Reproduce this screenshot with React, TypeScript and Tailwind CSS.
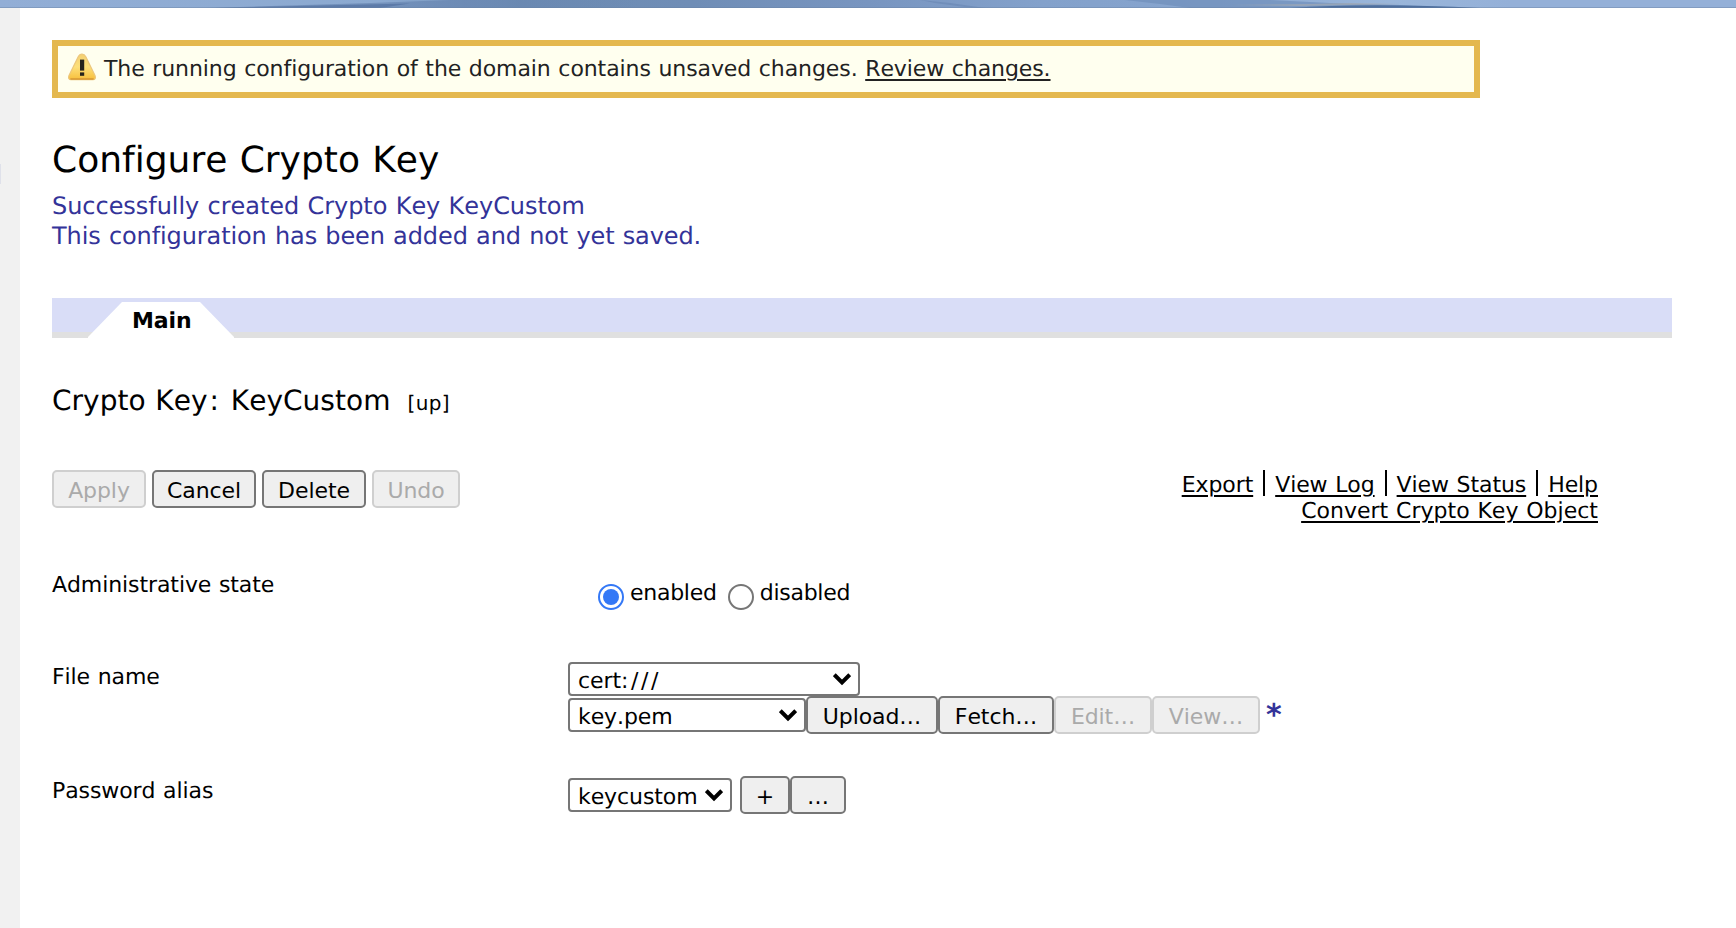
import type { ReactNode } from "react";

function Button({ children, className = "", disabled = false }: { children: ReactNode; className?: string; disabled?: boolean }) {
  const tone = disabled ? "border-[#cfcfcf] text-[#aaaaaa]" : "border-[#767676] text-black";
  return (
    <button
      type="button"
      disabled={disabled}
      className={`flex h-[38px] shrink-0 items-center justify-center rounded-[5px] border-2 bg-[#efefef] pt-[3px] leading-[30px] whitespace-nowrap ${tone} ${className}`}
    >
      {children}
    </button>
  );
}

function Select({ children, className = "" }: { children: ReactNode; className?: string }) {
  return (
    <div className={`flex h-[34px] shrink-0 items-center justify-between rounded-[4px] border-2 border-[#767676] bg-white pr-[7px] pl-2 leading-[26px] whitespace-nowrap ${className}`}>
      <span className="pt-[5px]">{children}</span>
      <svg width="18" height="13" viewBox="0 0 18 13" className="shrink-0" fill="none" stroke="#000" strokeWidth="4">
        <path d="M1.3 1.6 L9 9.3 L16.7 1.6" />
      </svg>
    </div>
  );
}

function Link({ children }: { children: ReactNode }) {
  return (
    <a href="#" className="underline decoration-2 underline-offset-[3px]">
      {children}
    </a>
  );
}

function Divider() {
  return <span className="-mt-[3px] h-[26px] w-0.5 bg-black" />;
}

function Radio({ label, checked = false, className = "" }: { label: string; checked?: boolean; className?: string }) {
  return (
    <label className={`flex items-start ${className}`}>
      <span
        className={`mt-1 flex size-[26px] shrink-0 items-center justify-center rounded-full border-2 bg-white ${checked ? "border-[#3478f6]" : "border-[#767676]"}`}
      >
        {checked && <span className="size-4 rounded-full bg-[#3478f6]" />}
      </span>
      <span className="mt-px ml-[6px] leading-[26px] tracking-[-0.012em]">{label}</span>
    </label>
  );
}

function WarningIcon() {
  return (
    <svg width="30" height="28" viewBox="0 0 30 28" className="shrink-0">
      <defs>
        <linearGradient id="warn" x1="0" y1="0" x2="0" y2="1">
          <stop offset="0" stopColor="#f3cf72" />
          <stop offset="0.5" stopColor="#fde07a" />
          <stop offset="1" stopColor="#f7bf3c" />
        </linearGradient>
      </defs>
      <path
        d="M15 1 C16.8 1 18 2.2 18.8 3.8 L28 22.4 C29 24.8 28.2 26.6 26 26.6 L4 26.6 C1.8 26.6 1 24.8 2 22.4 L11.2 3.8 C12 2.2 13.2 1 15 1 Z"
        fill="url(#warn)"
        stroke="#ecc67c"
        strokeWidth="1.2"
      />
      <path d="M3.4 26 L26.6 26" stroke="#d99a35" strokeWidth="1.6" />
      <rect x="13" y="6.6" width="4.2" height="11" fill="#26241c" />
      <rect x="13" y="19.4" width="4.2" height="3.4" fill="#26241c" />
    </svg>
  );
}

function HeaderStrip() {
  return (
    <svg width="1736" height="8" viewBox="0 0 1736 8" className="block">
      <defs>
        <linearGradient id="sky" x1="0" y1="0" x2="1" y2="0">
          <stop offset="0" stopColor="#92aed6" />
          <stop offset="0.22" stopColor="#8ba9d0" />
          <stop offset="0.3" stopColor="#6d8cb3" />
          <stop offset="0.4" stopColor="#6f8db6" />
          <stop offset="0.5" stopColor="#7895c0" />
          <stop offset="0.6" stopColor="#83a1cb" />
          <stop offset="0.66" stopColor="#85a3cd" />
          <stop offset="0.8" stopColor="#9ab6da" />
          <stop offset="0.87" stopColor="#94b0d8" />
          <stop offset="1" stopColor="#94b0d8" />
        </linearGradient>
        <linearGradient id="ridge" x1="0" y1="0" x2="1" y2="0">
          <stop offset="0" stopColor="#6684b0" />
          <stop offset="0.6" stopColor="#6684b0" />
          <stop offset="1" stopColor="#6684b0" stopOpacity="0" />
        </linearGradient>
      </defs>
      <rect width="1736" height="8" fill="url(#sky)" />
      <path d="M205 8 Q290 5.5 370 3 L450 0 L640 0 L640 8 Z" fill="url(#ridge)" opacity="0.65" />
      <path d="M215 8 Q310 5.5 410 3.5 L380 8 Z" fill="#4e6d9c" opacity="0.6" />
      <path d="M920 0 L950 3 L985 8 L965 7 L935 3 Z" fill="#6382b0" opacity="0.5" />
      <path d="M1125 0 L1270 0 L1330 3 L1400 5 L1470 8 L1190 8 L1160 4 Z" fill="#6f8fba" opacity="0.7" />
      <path d="M1230 5 Q1290 4.5 1350 3 L1400 4 L1300 6 Z" fill="#a3a9b3" opacity="0.7" />
      <path d="M1290 8 Q1370 2.5 1480 8 Z" fill="#496a9a" opacity="0.9" />
      <rect y="7" width="1736" height="1" fill="#66809f" opacity="0.4" />
    </svg>
  );
}

export default function App() {
  return (
    <div className="flex h-[928px] w-[1736px] flex-col overflow-hidden bg-white font-['Verdana','DejaVu_Sans',sans-serif] text-[22px] leading-[26px] tracking-[-0.004em] text-black [font-kerning:none] [text-rendering:geometricPrecision] [word-spacing:0.034em]">
      <HeaderStrip />
      <div className="flex flex-1">
        <aside className="w-5 shrink-0 bg-[#f1f1f1] pt-[156px]">
          <div className="h-5 w-px bg-[#dfe1ea]" />
        </aside>
        <main className="flex-1 pt-8 pl-8">
          <div className="flex h-[58px] w-[1428px] items-start border-6 border-[#e4b84f] bg-[#ffffef] pl-[9px] text-[#222222]">
            <div className="mt-[7px]">
              <WarningIcon />
            </div>
            <p className="mt-[11px] ml-[7px] whitespace-pre">
              The running configuration of the domain contains unsaved changes. <Link>Review changes.</Link>
            </p>
          </div>

          <h1 className="mt-[41px] text-[36px] leading-[44px] tracking-[0.0005em]">Configure Crypto Key</h1>
          <div className="mt-2 text-[24px] leading-[30px] text-[#333399]">
            <p className="tracking-[-0.002em]">Successfully created Crypto Key KeyCustom</p>
            <p className="tracking-[-0.0045em]">This configuration has been added and not yet saved.</p>
          </div>

          <nav className="mt-[47px] flex h-10 w-[1620px] border-b-6 border-[#e0e0e0] bg-[#d9ddf7]">
            <div className="mt-1 ml-9 h-9 w-[146px] bg-white pl-[44px] text-[22px] leading-[40px] font-bold [clip-path:polygon(34px_0,112px_0,146px_35px,146px_36px,0_36px,0_35px)]">
              <span>Main</span>
            </div>
          </nav>

          <h2 className="mt-[45px] flex h-[35px] items-baseline text-[28px] leading-[36px] tracking-[0.001em]">
            <span>
              Crypto Key<span className="px-[2px]">:</span> KeyCustom
            </span>
            <span className="ml-[17px] text-[20px] tracking-[0.02em]">[up]</span>
          </h2>

          <div className="mt-[52px] flex h-[52px] w-[1546px] items-start justify-between">
            <div className="flex gap-[6px]">
              <Button disabled className="w-[94px]">Apply</Button>
              <Button className="w-[104px]">Cancel</Button>
              <Button className="w-[104px]">Delete</Button>
              <Button disabled className="w-[88px]">Undo</Button>
            </div>
            <div className="flex flex-col items-end pt-[3px]">
              <div className="flex h-[26px] gap-[10px]">
                <Link>Export</Link>
                <Divider />
                <Link>View Log</Link>
                <Divider />
                <Link>View Status</Link>
                <Divider />
                <Link>Help</Link>
              </div>
              <div className="tracking-[0.001em]">
                <Link>Convert Crypto Key Object</Link>
              </div>
            </div>
          </div>

          <section className="mt-[51px] flex h-[91px]">
            <div className="w-[516px]">Administrative state</div>
            <div className="flex pt-[7px] pl-[30px]">
              <Radio label="enabled" checked />
              <Radio label="disabled" className="ml-[11px]" />
            </div>
          </section>

          <section className="flex h-[115px]">
            <div className="w-[516px] pt-px">File name</div>
            <div className="-mt-0.5">
              <Select className="w-[292px]">
                cert<span className="tracking-[0.12em]">:///</span>
              </Select>
              <div className="flex items-center">
                <Select className="w-[238px]">key.pem</Select>
                <Button className="w-[132px]">Upload…</Button>
                <Button className="w-[116px]">Fetch…</Button>
                <Button disabled className="w-[98px]">Edit…</Button>
                <Button disabled className="w-[108px]">View…</Button>
                <span className="mt-[2px] ml-1.5 text-[30px] font-bold text-[#333399]">*</span>
              </div>
            </div>
          </section>

          <section className="flex">
            <div className="w-[516px]">Password alias</div>
            <div className="-mt-[3px] flex items-center">
              <Select className="w-[164px]">keycustom</Select>
              <Button className="ml-2 w-[50px]">+</Button>
              <Button className="w-14">…</Button>
            </div>
          </section>
        </main>
      </div>
    </div>
  );
}
